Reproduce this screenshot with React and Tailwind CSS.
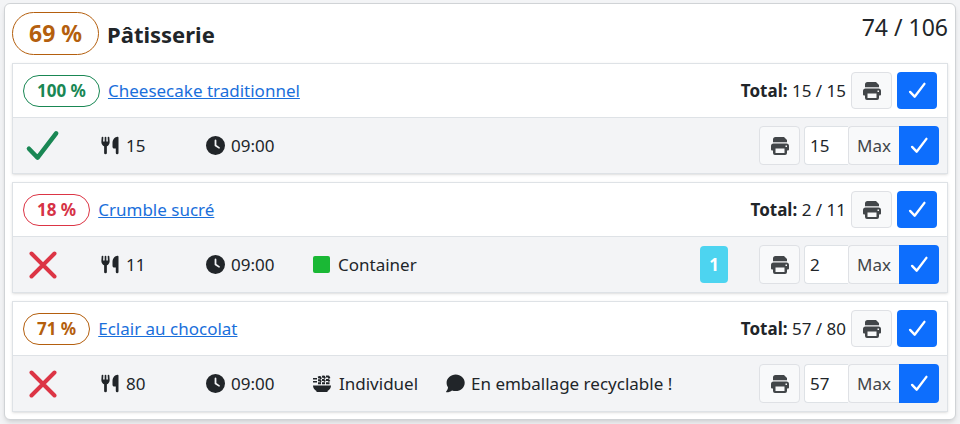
import React from 'react';
import { FaClock } from 'react-icons/fa6';

const products = [
    { name: 'Cheesecake traditionnel', done: 15, total: 15, percent: 100, time: '09:00' },
    { name: 'Crumble sucré', done: 2, total: 11, percent: 18, time: '09:00', packaging: 'Container', pending: 1 },
    { name: 'Eclair au chocolat', done: 57, total: 80, percent: 71, time: '09:00', packaging: 'Individuel', comment: 'En emballage recyclable !' },
];

const percentColor = (percent) => {
    if (percent === 100) return 'border-[#198754] text-[#198754]';
    if (percent < 50) return 'border-[#dc3545] text-[#d63346]';
    return 'border-[#b45f0e] text-[#b45f0e]';
};

const CheckIcon = ({ className }) => (
    <svg viewBox="0 0 20 20" className={className} fill="none" stroke="currentColor" strokeWidth="2.5" strokeLinecap="round" strokeLinejoin="round" aria-hidden="true">
        <path d="M2.200 11.500 7 16.500 17.300 3" />
    </svg>
);

const CrossIcon = ({ className }) => (
    <svg viewBox="0 0 28 28" className={className} fill="none" stroke="currentColor" strokeWidth="4" strokeLinecap="round" aria-hidden="true">
        <path d="M2.500 2.500 25.500 25.500M25.500 2.500 2.500 25.500" />
    </svg>
);

const UtensilsIcon = () => (
    <svg viewBox="0 0 19 19" className="size-[19px]" aria-hidden="true">
        <path d="M1.500 1.500 1.200 6.200a3.300 3.300 0 0 0 6.600 0L7.500 1.500M4.500 1.500V17" fill="none" stroke="currentColor" strokeWidth="1.700" strokeLinecap="round" />
        <path d="M2 5.500h5v2.300a2.500 2.500 0 0 1-5 0ZM3.200 9h2.600v8a1.300 1.300 0 0 1-2.600 0Z" fill="currentColor" />
        <path d="M16.500.7c.6 0 1 .4 1 1V17a1.300 1.300 0 0 1-2.700 0v-4.500h-1.500c-1 0-1.800-.8-1.800-1.800V7c0-3.500 2.500-6.300 5-6.300Z" fill="currentColor" />
    </svg>
);

const CommentIcon = () => (
    <svg viewBox="0 0 19 19" className="size-[19px]" fill="currentColor" aria-hidden="true">
        <path d="M9.700.5c5 0 9 3.700 9 8.300s-4 8.300-9 8.300c-1.300 0-2.600-.3-3.700-.7-1.200.9-3.100 1.900-5.300 1.900-.6 0-.8-.7-.4-1.100.8-.8 1.700-2.300 1.700-3.900C1.100 12 .6 10.500.6 8.800.6 4.200 4.700.5 9.700.5Z" />
    </svg>
);

const PrintIcon = () => (
    <svg viewBox="0 0 20 20" className="size-5" fill="currentColor" aria-hidden="true">
        <path d="M5.500 1H14l3 3v2.300H3V3.500A2.500 2.500 0 0 1 5.500 1Z" />
        <path fillRule="evenodd" d="M3.500 7.500h13A2.500 2.500 0 0 1 19 10v3.500a1 1 0 0 1-1 1h-1V17a2 2 0 0 1-2 2H5a2 2 0 0 1-2-2v-2.500H2a1 1 0 0 1-1-1V10a2.500 2.500 0 0 1 2.500-2.500ZM5.500 12.500V17h9v-4.500ZM15.500 9.500V11H17V9.500Z" />
    </svg>
);

const BowlIcon = () => (
    <svg viewBox="0 0 18 18" className="size-[18px]" aria-hidden="true">
        <path d="M0 10.500h18c0 2.600-1.400 4.400-3.500 5.500v1h-11v-1C1.400 14.900 0 13.100 0 10.500Z" fill="currentColor" />
        <path d="M0 3.700h4M0 6.700h4" fill="none" stroke="currentColor" strokeWidth="1.500" />
        <path d="M5 2.500l2-.5 1 2M9 1.800l2-.3 1 2M13 1.500h2.500l1 2M5 5.300h2l1 1.500M9 5h2l1 1.500M13 5h2.500l1 1.500M5 8.300h3M9 8.300h3M13 8.300h3.500" fill="none" stroke="currentColor" strokeWidth="2" strokeLinejoin="round" />
    </svg>
);

const Percent = ({ value, className }) => (
    <span className={`rounded-full border bg-white font-bold ${percentColor(value)} ${className}`}>{value} %</span>
);

const PrintButton = ({ className }) => (
    <button type="button" aria-label="Imprimer" className={`flex w-[41px] items-center justify-center rounded border border-[#dfe1e5] bg-[#f8f9fa] text-[#424649] ${className}`}>
        <PrintIcon />
    </button>
);

const ValidateButton = ({ className }) => (
    <button type="button" aria-label="Valider" className={`flex w-10 items-center justify-center bg-[#0d6efd] text-white ${className}`}>
        <CheckIcon className="size-[19px]" />
    </button>
);

const Product = ({ product }) => {
    const { name, done, total, percent, time, packaging, comment, pending } = product;
    return (
        <section className="border border-[#dee2e6] shadow-sm">
            <div className="flex h-[54px] items-center justify-between border-b border-[#dee2e6] px-2.5">
                <div className="flex items-center gap-2">
                    <Percent value={percent} className="px-[13px] py-[3px] leading-6" />
                    <a href="#" className="text-[#1a6fdb] underline">{name}</a>
                </div>
                <div className="flex items-center gap-[5px]">
                    <span><b>Total:</b> {done} / {total}</span>
                    <PrintButton className="h-[37px]" />
                    <ValidateButton className="h-[37px] rounded" />
                </div>
            </div>
            <div className="flex h-[55px] items-center bg-[#f3f4f6] pr-2">
                <div className="flex w-[88px] shrink-0 pl-3">
                    {done === total
                        ? <CheckIcon className="size-9 text-[#198754]" />
                        : <CrossIcon className="ml-1 size-7 text-[#dc3545]" />}
                </div>
                <div className="flex w-[105px] shrink-0 items-center gap-1.5"><UtensilsIcon />{total}</div>
                <div className="flex w-[107px] shrink-0 items-center gap-1.5"><FaClock className="size-[19px]" />{time}</div>
                {packaging && (
                    <div className="flex w-[133px] shrink-0 items-center gap-2">
                        {packaging === 'Container' ? <span className="size-[17px] rounded-xs bg-[#1ab835]" /> : <BowlIcon />}
                        {packaging}
                    </div>
                )}
                {comment && <div className="flex items-center gap-1.5"><CommentIcon />{comment}</div>}
                <div className="ml-auto flex items-center">
                    {pending && <span className="mr-[31px] flex h-[37px] w-7 items-center justify-center rounded bg-[#4dd4f0] font-bold text-white">{pending}</span>}
                    <PrintButton className="mr-1 h-[39px]" />
                    <input type="text" aria-label={`Quantité ${name}`} defaultValue={done} className="h-[39px] w-11 rounded-l border border-r-0 border-[#dee2e6] bg-white pl-[5px]" />
                    <button type="button" className="h-[39px] w-[51px] rounded-l border border-r-0 border-[#dfe1e5] bg-[#f8f9fa] text-[#424649]">Max</button>
                    <ValidateButton className="h-[39px] rounded-r" />
                </div>
            </div>
        </section>
    );
};

const App = () => {
    return (
        <main className="min-h-screen bg-[#f3f4f6] px-1 pt-[3px] pb-1 font-['Noto_Sans',sans-serif] text-[17px] leading-6 text-[#212529]">
            <div className="rounded-md border border-[#d0d3d6] bg-white px-[7px] pt-2 pb-[7px] shadow-md">
                <header className="mb-2 flex items-start justify-between">
                    <div className="flex items-center gap-2">
                        <Percent value={69} className="px-4 py-1.5 text-[23px] leading-[29px]" />
                        <h2 className="text-[22px] font-bold">Pâtisserie</h2>
                    </div>
                    <span className="text-[23px] leading-[30px]">74 / 106</span>
                </header>
                <div className="flex flex-col gap-2">
                    {products.map((product) => (
                        <Product key={product.name} product={product} />
                    ))}
                </div>
            </div>
        </main>
    );
};

export default App;
